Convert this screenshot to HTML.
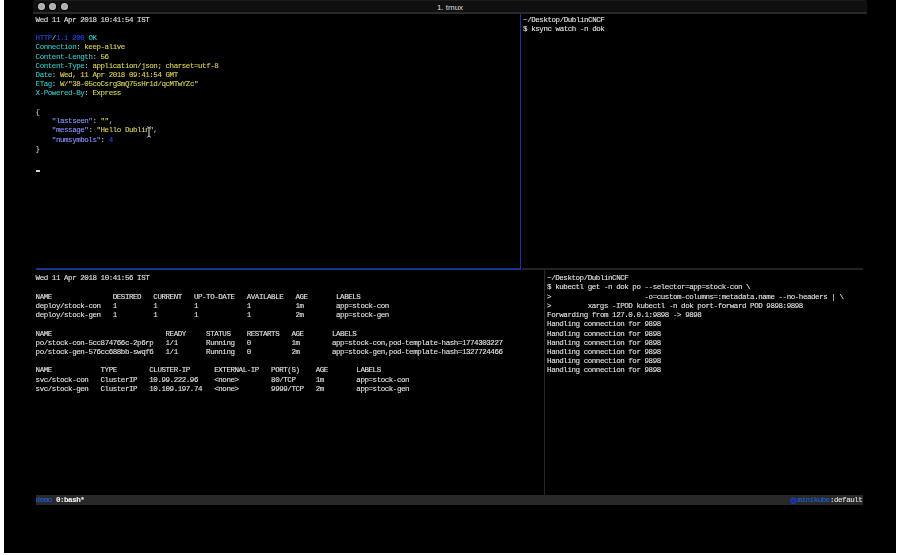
<!DOCTYPE html>
<html><head><meta charset="utf-8">
<style>
html,body{margin:0;padding:0;width:900px;height:555px;overflow:hidden;background:#fff}
#scr{position:absolute;left:4px;top:0;width:892px;height:553px;background:#000}
#tb{position:absolute;left:33px;top:0;width:834px;height:12px;background:#101010;border-bottom:2px solid #2a2a2a;border-top:1px solid #1c1c1c;border-radius:3px 3px 0 0;box-sizing:border-box;height:14px}
.dot{position:absolute;top:2.2px;width:7.2px;height:7.2px;border-radius:50%;background:radial-gradient(circle,#a4a4a4 0%,#b4b4b4 45%,#cacaca 80%);box-shadow:0 0 0 1px #060606}
#title{position:absolute;left:0;width:834px;top:1.5px;text-align:center;font:8px/9px "Liberation Sans",sans-serif;color:#dcdcdc}
.t{position:absolute;white-space:pre;font-family:"Liberation Mono",monospace;font-size:7.5px;letter-spacing:-0.44px;line-height:9.23px;-webkit-text-stroke:0.1px currentColor}
#txt{position:absolute;left:0;top:0;width:900px;height:555px;will-change:transform}
.ln{position:absolute}
</style></head><body>
<div id="scr"></div>
<div id="tb">
 <div class="dot" style="left:4.5px"></div>
 <div class="dot" style="left:16px"></div>
 <div class="dot" style="left:27.5px"></div>
 <div id="title">1. tmux</div>
</div>
<div class="ln" style="left:519.5px;top:14px;width:1.5px;height:255px;background:#0e38a8"></div>
<div class="ln" style="left:36px;top:268.2px;width:485px;height:1.5px;background:#14368f"></div>
<div class="ln" style="left:522px;top:268px;width:341px;height:1.5px;background:#232323"></div>
<div class="ln" style="left:544px;top:269px;width:1px;height:227px;background:#282828"></div>
<div class="ln" style="left:36px;top:495.4px;width:827px;height:9.3px;background:#292929"></div>
<div id="txt">
<span class="t" style="left:35.60px;top:15.60px;color:#e2e2e2">Wed 11 Apr 2018 10:41:54 IST</span>
<span class="t" style="left:35.60px;top:34.06px;color:#2448f0">HTTP</span>
<span class="t" style="left:51.84px;top:34.06px;color:#bdbdbd">/</span>
<span class="t" style="left:55.90px;top:34.06px;color:#2448f0">1.1</span>
<span class="t" style="left:72.14px;top:34.06px;color:#2448f0">200</span>
<span class="t" style="left:88.38px;top:34.06px;color:#38c4c4">OK</span>
<span class="t" style="left:35.60px;top:43.29px;color:#38c4c4">Connection</span>
<span class="t" style="left:76.20px;top:43.29px;color:#bdbdbd">:</span>
<span class="t" style="left:84.32px;top:43.29px;color:#dcd454">keep-alive</span>
<span class="t" style="left:35.60px;top:52.52px;color:#38c4c4">Content-Length</span>
<span class="t" style="left:92.44px;top:52.52px;color:#bdbdbd">:</span>
<span class="t" style="left:100.56px;top:52.52px;color:#dcd454">56</span>
<span class="t" style="left:35.60px;top:61.75px;color:#38c4c4">Content-Type</span>
<span class="t" style="left:84.32px;top:61.75px;color:#bdbdbd">:</span>
<span class="t" style="left:92.44px;top:61.75px;color:#dcd454">application/json; charset=utf-8</span>
<span class="t" style="left:35.60px;top:70.98px;color:#38c4c4">Date</span>
<span class="t" style="left:51.84px;top:70.98px;color:#bdbdbd">:</span>
<span class="t" style="left:59.96px;top:70.98px;color:#dcd454">Wed, 11 Apr 2018 09:41:54 GMT</span>
<span class="t" style="left:35.60px;top:80.21px;color:#38c4c4">ETag</span>
<span class="t" style="left:51.84px;top:80.21px;color:#bdbdbd">:</span>
<span class="t" style="left:59.96px;top:80.21px;color:#dcd454">W/&quot;38-05coCsrg3mQ75sHr1d/qcMTwYZc&quot;</span>
<span class="t" style="left:35.60px;top:89.44px;color:#38c4c4">X-Powered-By</span>
<span class="t" style="left:84.32px;top:89.44px;color:#bdbdbd">:</span>
<span class="t" style="left:92.44px;top:89.44px;color:#dcd454">Express</span>
<span class="t" style="left:35.60px;top:107.90px;color:#bdbdbd">{</span>
<span class="t" style="left:51.84px;top:117.13px;color:#8a96ff">&quot;lastseen&quot;</span>
<span class="t" style="left:92.44px;top:117.13px;color:#bdbdbd">:</span>
<span class="t" style="left:100.56px;top:117.13px;color:#dcd454">&quot;&quot;</span>
<span class="t" style="left:108.68px;top:117.13px;color:#bdbdbd">,</span>
<span class="t" style="left:51.84px;top:126.36px;color:#8a96ff">&quot;message&quot;</span>
<span class="t" style="left:88.38px;top:126.36px;color:#bdbdbd">:</span>
<span class="t" style="left:96.50px;top:126.36px;color:#dcd454">&quot;Hello Dublin&quot;</span>
<span class="t" style="left:153.34px;top:126.36px;color:#bdbdbd">,</span>
<span class="t" style="left:51.84px;top:135.59px;color:#8a96ff">&quot;numsymbols&quot;</span>
<span class="t" style="left:100.56px;top:135.59px;color:#bdbdbd">:</span>
<span class="t" style="left:108.68px;top:135.59px;color:#2448f0">4</span>
<span class="t" style="left:35.60px;top:144.82px;color:#bdbdbd">}</span>
<span class="t" style="left:523.10px;top:15.60px;color:#e2e2e2">~/Desktop/DublinCNCF</span>
<span class="t" style="left:523.10px;top:24.83px;color:#e2e2e2">$ ksync watch -n dok</span>
<span class="t" style="left:35.60px;top:274.15px;color:#e2e2e2">Wed 11 Apr 2018 10:41:56 IST</span>
<span class="t" style="left:35.60px;top:292.61px;color:#e2e2e2">NAME</span>
<span class="t" style="left:112.74px;top:292.61px;color:#e2e2e2">DESIRED</span>
<span class="t" style="left:153.34px;top:292.61px;color:#e2e2e2">CURRENT</span>
<span class="t" style="left:193.94px;top:292.61px;color:#e2e2e2">UP-TO-DATE</span>
<span class="t" style="left:246.72px;top:292.61px;color:#e2e2e2">AVAILABLE</span>
<span class="t" style="left:295.44px;top:292.61px;color:#e2e2e2">AGE</span>
<span class="t" style="left:336.04px;top:292.61px;color:#e2e2e2">LABELS</span>
<span class="t" style="left:35.60px;top:301.84px;color:#e2e2e2">deploy/stock-con</span>
<span class="t" style="left:112.74px;top:301.84px;color:#e2e2e2">1</span>
<span class="t" style="left:153.34px;top:301.84px;color:#e2e2e2">1</span>
<span class="t" style="left:193.94px;top:301.84px;color:#e2e2e2">1</span>
<span class="t" style="left:246.72px;top:301.84px;color:#e2e2e2">1</span>
<span class="t" style="left:295.44px;top:301.84px;color:#e2e2e2">1m</span>
<span class="t" style="left:336.04px;top:301.84px;color:#e2e2e2">app=stock-con</span>
<span class="t" style="left:35.60px;top:311.07px;color:#e2e2e2">deploy/stock-gen</span>
<span class="t" style="left:112.74px;top:311.07px;color:#e2e2e2">1</span>
<span class="t" style="left:153.34px;top:311.07px;color:#e2e2e2">1</span>
<span class="t" style="left:193.94px;top:311.07px;color:#e2e2e2">1</span>
<span class="t" style="left:246.72px;top:311.07px;color:#e2e2e2">1</span>
<span class="t" style="left:295.44px;top:311.07px;color:#e2e2e2">2m</span>
<span class="t" style="left:336.04px;top:311.07px;color:#e2e2e2">app=stock-gen</span>
<span class="t" style="left:35.60px;top:329.53px;color:#e2e2e2">NAME</span>
<span class="t" style="left:165.52px;top:329.53px;color:#e2e2e2">READY</span>
<span class="t" style="left:206.12px;top:329.53px;color:#e2e2e2">STATUS</span>
<span class="t" style="left:246.72px;top:329.53px;color:#e2e2e2">RESTARTS</span>
<span class="t" style="left:291.38px;top:329.53px;color:#e2e2e2">AGE</span>
<span class="t" style="left:331.98px;top:329.53px;color:#e2e2e2">LABELS</span>
<span class="t" style="left:35.60px;top:338.76px;color:#e2e2e2">po/stock-con-5cc874766c-2p6rp</span>
<span class="t" style="left:165.52px;top:338.76px;color:#e2e2e2">1/1</span>
<span class="t" style="left:206.12px;top:338.76px;color:#e2e2e2">Running</span>
<span class="t" style="left:246.72px;top:338.76px;color:#e2e2e2">0</span>
<span class="t" style="left:291.38px;top:338.76px;color:#e2e2e2">1m</span>
<span class="t" style="left:331.98px;top:338.76px;color:#e2e2e2">app=stock-con,pod-template-hash=1774303227</span>
<span class="t" style="left:35.60px;top:347.99px;color:#e2e2e2">po/stock-gen-576cc688bb-swqf6</span>
<span class="t" style="left:165.52px;top:347.99px;color:#e2e2e2">1/1</span>
<span class="t" style="left:206.12px;top:347.99px;color:#e2e2e2">Running</span>
<span class="t" style="left:246.72px;top:347.99px;color:#e2e2e2">0</span>
<span class="t" style="left:291.38px;top:347.99px;color:#e2e2e2">2m</span>
<span class="t" style="left:331.98px;top:347.99px;color:#e2e2e2">app=stock-gen,pod-template-hash=1327724466</span>
<span class="t" style="left:35.60px;top:366.45px;color:#e2e2e2">NAME</span>
<span class="t" style="left:100.56px;top:366.45px;color:#e2e2e2">TYPE</span>
<span class="t" style="left:149.28px;top:366.45px;color:#e2e2e2">CLUSTER-IP</span>
<span class="t" style="left:214.24px;top:366.45px;color:#e2e2e2">EXTERNAL-IP</span>
<span class="t" style="left:271.08px;top:366.45px;color:#e2e2e2">PORT(S)</span>
<span class="t" style="left:315.74px;top:366.45px;color:#e2e2e2">AGE</span>
<span class="t" style="left:356.34px;top:366.45px;color:#e2e2e2">LABELS</span>
<span class="t" style="left:35.60px;top:375.68px;color:#e2e2e2">svc/stock-con</span>
<span class="t" style="left:100.56px;top:375.68px;color:#e2e2e2">ClusterIP</span>
<span class="t" style="left:149.28px;top:375.68px;color:#e2e2e2">10.99.222.96</span>
<span class="t" style="left:214.24px;top:375.68px;color:#e2e2e2">&lt;none&gt;</span>
<span class="t" style="left:271.08px;top:375.68px;color:#e2e2e2">80/TCP</span>
<span class="t" style="left:315.74px;top:375.68px;color:#e2e2e2">1m</span>
<span class="t" style="left:356.34px;top:375.68px;color:#e2e2e2">app=stock-con</span>
<span class="t" style="left:35.60px;top:384.91px;color:#e2e2e2">svc/stock-gen</span>
<span class="t" style="left:100.56px;top:384.91px;color:#e2e2e2">ClusterIP</span>
<span class="t" style="left:149.28px;top:384.91px;color:#e2e2e2">10.109.197.74</span>
<span class="t" style="left:214.24px;top:384.91px;color:#e2e2e2">&lt;none&gt;</span>
<span class="t" style="left:271.08px;top:384.91px;color:#e2e2e2">9999/TCP</span>
<span class="t" style="left:315.74px;top:384.91px;color:#e2e2e2">2m</span>
<span class="t" style="left:356.34px;top:384.91px;color:#e2e2e2">app=stock-gen</span>
<span class="t" style="left:547.10px;top:274.15px;color:#e2e2e2">~/Desktop/DublinCNCF</span>
<span class="t" style="left:547.10px;top:283.38px;color:#e2e2e2">$ kubectl get -n dok po --selector=app=stock-con \</span>
<span class="t" style="left:547.10px;top:292.61px;color:#e2e2e2">&gt;</span>
<span class="t" style="left:644.54px;top:292.61px;color:#e2e2e2">-o=custom-columns=:metadata.name --no-headers | \</span>
<span class="t" style="left:547.10px;top:301.84px;color:#e2e2e2">&gt;</span>
<span class="t" style="left:587.70px;top:301.84px;color:#e2e2e2">xargs -IPOD kubectl -n dok port-forward POD 9898:9898</span>
<span class="t" style="left:547.10px;top:311.07px;color:#e2e2e2">Forwarding from 127.0.0.1:9898 -&gt; 9898</span>
<span class="t" style="left:547.10px;top:320.30px;color:#e2e2e2">Handling connection for 9898</span>
<span class="t" style="left:547.10px;top:329.53px;color:#e2e2e2">Handling connection for 9898</span>
<span class="t" style="left:547.10px;top:338.76px;color:#e2e2e2">Handling connection for 9898</span>
<span class="t" style="left:547.10px;top:347.99px;color:#e2e2e2">Handling connection for 9898</span>
<span class="t" style="left:547.10px;top:357.22px;color:#e2e2e2">Handling connection for 9898</span>
<span class="t" style="left:547.10px;top:366.45px;color:#e2e2e2">Handling connection for 9898</span>
<span class="t" style="left:35.6px;top:496.1px;color:#2060e0">demo</span>
<span class="t" style="left:55.9px;top:496.1px;color:#f0f0f0;font-weight:bold">0:bash*</span>
<span class="t" style="left:797.4px;top:496.1px;color:#2060e0">minikube</span>
<span class="t" style="left:829.9px;top:496.1px;color:#e0e0e0">:default</span>
</div>
<div class="ln" style="left:36.3px;top:170.4px;width:4.2px;height:1.2px;background:#d0d0d0"></div>
<svg style="position:absolute;left:146px;top:126px" width="6" height="12" viewBox="0 0 6 12"><path d="M1.2 0.8 Q3 1.2 3 2.5 L3 9.5 Q3 10.8 1.2 11.2 M4.8 0.8 Q3 1.2 3 2.5 M3 9.5 Q3 10.8 4.8 11.2" fill="none" stroke="#000" stroke-width="2.2"/><path d="M1.2 0.8 Q3 1.2 3 2.5 L3 9.5 Q3 10.8 1.2 11.2 M4.8 0.8 Q3 1.2 3 2.5 M3 9.5 Q3 10.8 4.8 11.2" fill="none" stroke="#e0e0e0" stroke-width="1"/></svg>
<svg style="position:absolute;left:790px;top:496.5px" width="7" height="7" viewBox="0 0 14 14"><path d="M7 0.5 L12.6 3.2 L14 9.2 L10.1 14 L3.9 14 L0 9.2 L1.4 3.2 Z" fill="#1e38b0"/><circle cx="7" cy="7.8" r="2.6" fill="none" stroke="#0e1a50" stroke-width="1.4" stroke-dasharray="1.6 1"/></svg>
</body></html>
